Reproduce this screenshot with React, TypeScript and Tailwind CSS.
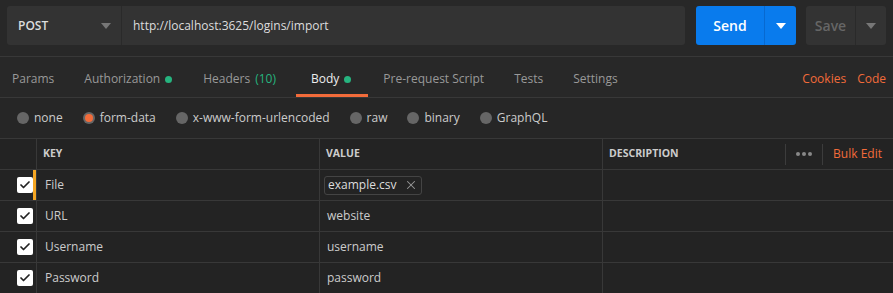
import { Check, X } from "lucide-react";

const tabs = [
  { label: "Params", pad: "pl-[12px] pr-[15px]" },
  { label: "Authorization", dot: true, pad: "px-[15px]" },
  { label: "Headers", count: "(10)", pad: "pl-[16px] pr-[20px]" },
  { label: "Body", dot: true, active: true, pad: "pl-[15px] pr-[17px]" },
  { label: "Pre-request Script", pad: "px-[15px]" },
  { label: "Tests", pad: "px-[15px]" },
  { label: "Settings", pad: "px-[15px]" },
];

const bodyTypes = [
  { label: "none" },
  { label: "form-data", active: true },
  { label: "x-www-form-urlencoded" },
  { label: "raw" },
  { label: "binary" },
  { label: "GraphQL" },
];

const rows = [
  { key: "File", value: "example.csv", file: true },
  { key: "URL", value: "website" },
  { key: "Username", value: "username" },
  { key: "Password", value: "password" },
];

function Caret({ className }: { className?: string }) {
  return (
    <svg width="10" height="6" viewBox="0 0 10 6" className={className}>
      <path d="M0 0h10L5 6z" fill="currentColor" />
    </svg>
  );
}

export default function App() {
  return (
    <div
      className="w-[893px] h-[293px] overflow-hidden bg-[#282828] text-[12px] text-[#cccccc]"
      style={{ fontFamily: '"Open Sans", "Noto Sans", sans-serif' }}
    >
      {/* request bar */}
      <div className="h-[57px] flex items-start pt-[6px] pl-[7px] border-b border-[#383838]">
        <div className="flex h-[39px] w-[678px] rounded-[3px] bg-[#333333]">
          <div className="w-[115px] flex items-center justify-between pl-[11px] pr-[10px] border-r border-[#2a2a2a]">
            <span className="font-semibold text-[#dddddd]">POST</span>
            <Caret className="text-[#777777]" />
          </div>
          <div className="flex-1 flex items-center pl-[11px] text-[#dddddd]">
            http://localhost:3625/logins/import
          </div>
        </div>
        <div className="ml-[11px] flex h-[39px] w-[100px] rounded-[3px] bg-[#097bed] text-white">
          <div className="w-[69px] flex items-center justify-center text-[14px] font-semibold border-r border-[#0769d0]">
            Send
          </div>
          <div className="flex-1 flex items-center justify-center">
            <Caret />
          </div>
        </div>
        <div className="ml-[10px] flex h-[39px] w-[80px] rounded-[3px] bg-[#333333] text-[#666666]">
          <div className="w-[50px] flex items-center justify-center text-[14px] font-semibold border-r border-[#2a2a2a]">
            Save
          </div>
          <div className="flex-1 flex items-center justify-center text-[#777777]">
            <Caret />
          </div>
        </div>
      </div>

      {/* tabs */}
      <div className="h-[41px] flex items-stretch border-b border-[#383838] pr-[7px]">
        {tabs.map((t) => (
          <div
            key={t.label}
            className={`relative flex items-center pt-[4px] ${t.pad} ${
              t.active ? "text-[#eeeeee]" : "text-[#999999]"
            }`}
          >
            <span>{t.label}</span>
            {t.count && <span className="ml-[5px] text-[#26b47f]">{t.count}</span>}
            {t.dot && <span className="ml-[5px] w-[7px] h-[7px] rounded-full bg-[#26b47f]" />}
            {t.active && (
              <span className="absolute left-0 right-0 bottom-0 h-[3px] bg-[#f26b3a]" />
            )}
          </div>
        ))}
        <div className="ml-auto flex items-center pt-[4px] gap-[11px] text-[#f26b3a]">
          <span>Cookies</span>
          <span>Code</span>
        </div>
      </div>

      {/* body types */}
      <div className="h-[40px] flex items-center pl-[17px] bg-[#262626]">
        {bodyTypes.map((b) => (
          <div key={b.label} className="flex items-center mr-[20px]">
            <span className="w-[12px] h-[12px] rounded-full bg-[#666666] flex items-center justify-center">
              {b.active && <span className="w-[8px] h-[8px] rounded-full bg-[#f26b3a]" />}
            </span>
            <span className="ml-[5px] text-[#cccccc]">{b.label}</span>
          </div>
        ))}
      </div>

      {/* table */}
      <div className="bg-[#232323] border-t border-[#383838]">
        <div className="flex h-[31px] border-b border-[#383838] text-[10.5px] font-bold text-[#cccccc]">
          <div className="w-[37px] border-r border-[#383838]" />
          <div className="w-[283px] border-r border-[#383838] flex items-center pl-[6px]">KEY</div>
          <div className="w-[283px] border-r border-[#383838] flex items-center pl-[6px]">VALUE</div>
          <div className="flex-1 flex items-center pl-[6px]">
            <span>DESCRIPTION</span>
            <div className="ml-auto flex items-center h-[21px]">
              <div className="h-full border-l border-[#3c3c3c] w-[37px] flex items-center justify-center gap-[2px]">
                <span className="w-[4px] h-[4px] rounded-full bg-[#888888]" />
                <span className="w-[4px] h-[4px] rounded-full bg-[#888888]" />
                <span className="w-[4px] h-[4px] rounded-full bg-[#888888]" />
              </div>
              <div className="h-full border-l border-[#3c3c3c] flex items-center pl-[10px] pr-[11px] text-[12px] font-normal text-[#f26b3a]">
                Bulk Edit
              </div>
            </div>
          </div>
        </div>
        {rows.map((r) => (
          <div key={r.key} className="flex h-[31px] border-b border-[#383838] text-[#cccccc]">
            <div className="w-[37px] border-r border-[#383838] flex items-center relative">
              <span className="ml-[17px] w-[16px] h-[16px] rounded-[2px] bg-white flex items-center justify-center">
                <Check size={12} strokeWidth={3.5} className="text-[#222222]" />
              </span>
              {r.file && <span className="absolute right-0 top-0 bottom-0 w-[3px] bg-[#f5a623]" />}
            </div>
            <div className="w-[283px] border-r border-[#383838] flex items-center pl-[8px]">{r.key}</div>
            <div className="w-[283px] border-r border-[#383838] flex items-center pl-[7px]">
              {r.file ? (
                <span className="-ml-[3px] flex items-center h-[19px] pl-[3px] pr-[3px] rounded-[3px] border border-[#444444] text-[#dddddd]">
                  {r.value}
                  <X size={14} strokeWidth={1.75} className="ml-[7px] text-[#999999]" />
                </span>
              ) : (
                r.value
              )}
            </div>
            <div className="flex-1" />
          </div>
        ))}
      </div>
    </div>
  );
}
